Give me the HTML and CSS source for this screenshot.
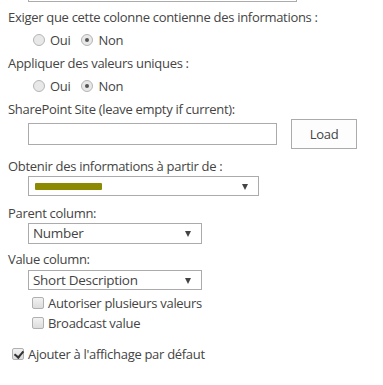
FILE: index.html
```html
<!DOCTYPE html>
<html lang="fr">
<head>
  <meta charset="UTF-8" />
  <title>Column settings</title>
  <link rel="stylesheet" href="styles.css">
</head>
<body>
  <div class="form">
    <div class="cut-box"></div>

    <div class="label first">Exiger que cette colonne contienne des informations :</div>
    <div class="radios">
      <span class="radio"></span><span class="opt">Oui</span>
      <span class="radio on"></span><span class="opt">Non</span>
    </div>

    <div class="label">Appliquer des valeurs uniques :</div>
    <div class="radios">
      <span class="radio"></span><span class="opt">Oui</span>
      <span class="radio on"></span><span class="opt">Non</span>
    </div>

    <div class="label">SharePoint Site (leave empty if current):</div>
    <div class="site-row">
      <div class="text-box"></div>
      <div class="load-btn">Load</div>
    </div>

    <div class="label gap7">Obtenir des informations à partir de :</div>
    <div class="select wide"><span class="blur"></span><span class="arrow"></span></div>

    <div class="label gap7">Parent column:</div>
    <div class="select narrow tall">Number<span class="arrow"></span></div>

    <div class="label gap5">Value column:</div>
    <div class="select narrow">Short Description<span class="arrow"></span></div>

    <div class="check-row sub first-check"><span class="box"></span>Autoriser plusieurs valeurs</div>
    <div class="check-row sub"><span class="box"></span>Broadcast value</div>

    <div class="check-row main"><span class="box checked"></span>Ajouter à l'affichage par défaut</div>
  </div>
</body>
</html>
```

FILE: styles.css
```css
* {
  box-sizing: border-box;
}

body {
  margin: 0;
  font-family: "Segoe UI", "Open Sans", sans-serif;
  font-size: 13px;
  letter-spacing: -0.3px;
  color: #444;
  background: #fff;
}

.form {
  padding-left: 8px;
}

.cut-box {
  margin-left: 20px;
  width: 269px;
  height: 2px;
  border: 1px solid #ababab;
  border-top: none;
}

.label {
  height: 20px;
  line-height: 20px;
  margin-top: 3px;
}

.label.first {
  margin-top: 5px;
}

.gap7 {
  margin-top: 7px;
}

.gap5 {
  margin-top: 5px;
}

.radios {
  display: flex;
  align-items: center;
  height: 20px;
  margin-top: 3px;
  padding-left: 25px;
}

.radio {
  width: 12px;
  height: 12px;
  border-radius: 50%;
  border: 1px solid #b5b5b5;
  background: #e8e8e8;
  margin-right: 5px;
  position: relative;
}

.radio.on::after {
  content: "";
  position: absolute;
  left: 3px;
  top: 3px;
  width: 4px;
  height: 4px;
  border-radius: 50%;
  background: #555;
}

.opt {
  margin-right: 11px;
}

.site-row {
  display: flex;
  align-items: center;
  height: 30px;
  padding-left: 20px;
}

.text-box {
  width: 249px;
  height: 22px;
  border: 1px solid #ababab;
}

.load-btn {
  width: 66px;
  height: 30px;
  margin-left: 14px;
  border: 1px solid #ababab;
  background: #fdfdfd;
  text-align: center;
  line-height: 28px;
  color: #444;
}

.select {
  position: relative;
  margin-left: 20px;
  height: 20px;
  line-height: 18px;
  border: 1px solid #ababab;
  padding-left: 4px;
  font-size: 13.5px;
}

.select.wide {
  width: 231px;
}

.select.narrow {
  width: 174px;
  margin-top: 1px;
}

.select.tall {
  height: 21px;
  line-height: 19px;
  margin-top: 0;
}

.arrow {
  position: absolute;
  right: 10px;
  top: 7px;
  border-left: 3.5px solid transparent;
  border-right: 3.5px solid transparent;
  border-top: 6px solid #444;
}

.blur {
  display: inline-block;
  width: 67px;
  height: 7px;
  margin-top: 6px;
  margin-left: 2px;
  background: #8b8a00;
  vertical-align: top;
  border-radius: 1px;
}

.check-row {
  display: flex;
  align-items: center;
  height: 20px;
}

.check-row.sub {
  padding-left: 24px;
}

.first-check {
  margin-top: 3px;
}

.check-row.main {
  padding-left: 4px;
  margin-top: 11px;
}

.box {
  width: 12px;
  height: 12px;
  border: 1px solid #b0b0b0;
  border-radius: 2px;
  background: linear-gradient(#f2f2f2, #dcdcdc);
  margin-right: 4px;
  position: relative;
}

.box.checked::after {
  content: "";
  position: absolute;
  left: 3px;
  top: 0;
  width: 4px;
  height: 7px;
  border-right: 2px solid #333;
  border-bottom: 2px solid #333;
  transform: rotate(40deg);
}
```
